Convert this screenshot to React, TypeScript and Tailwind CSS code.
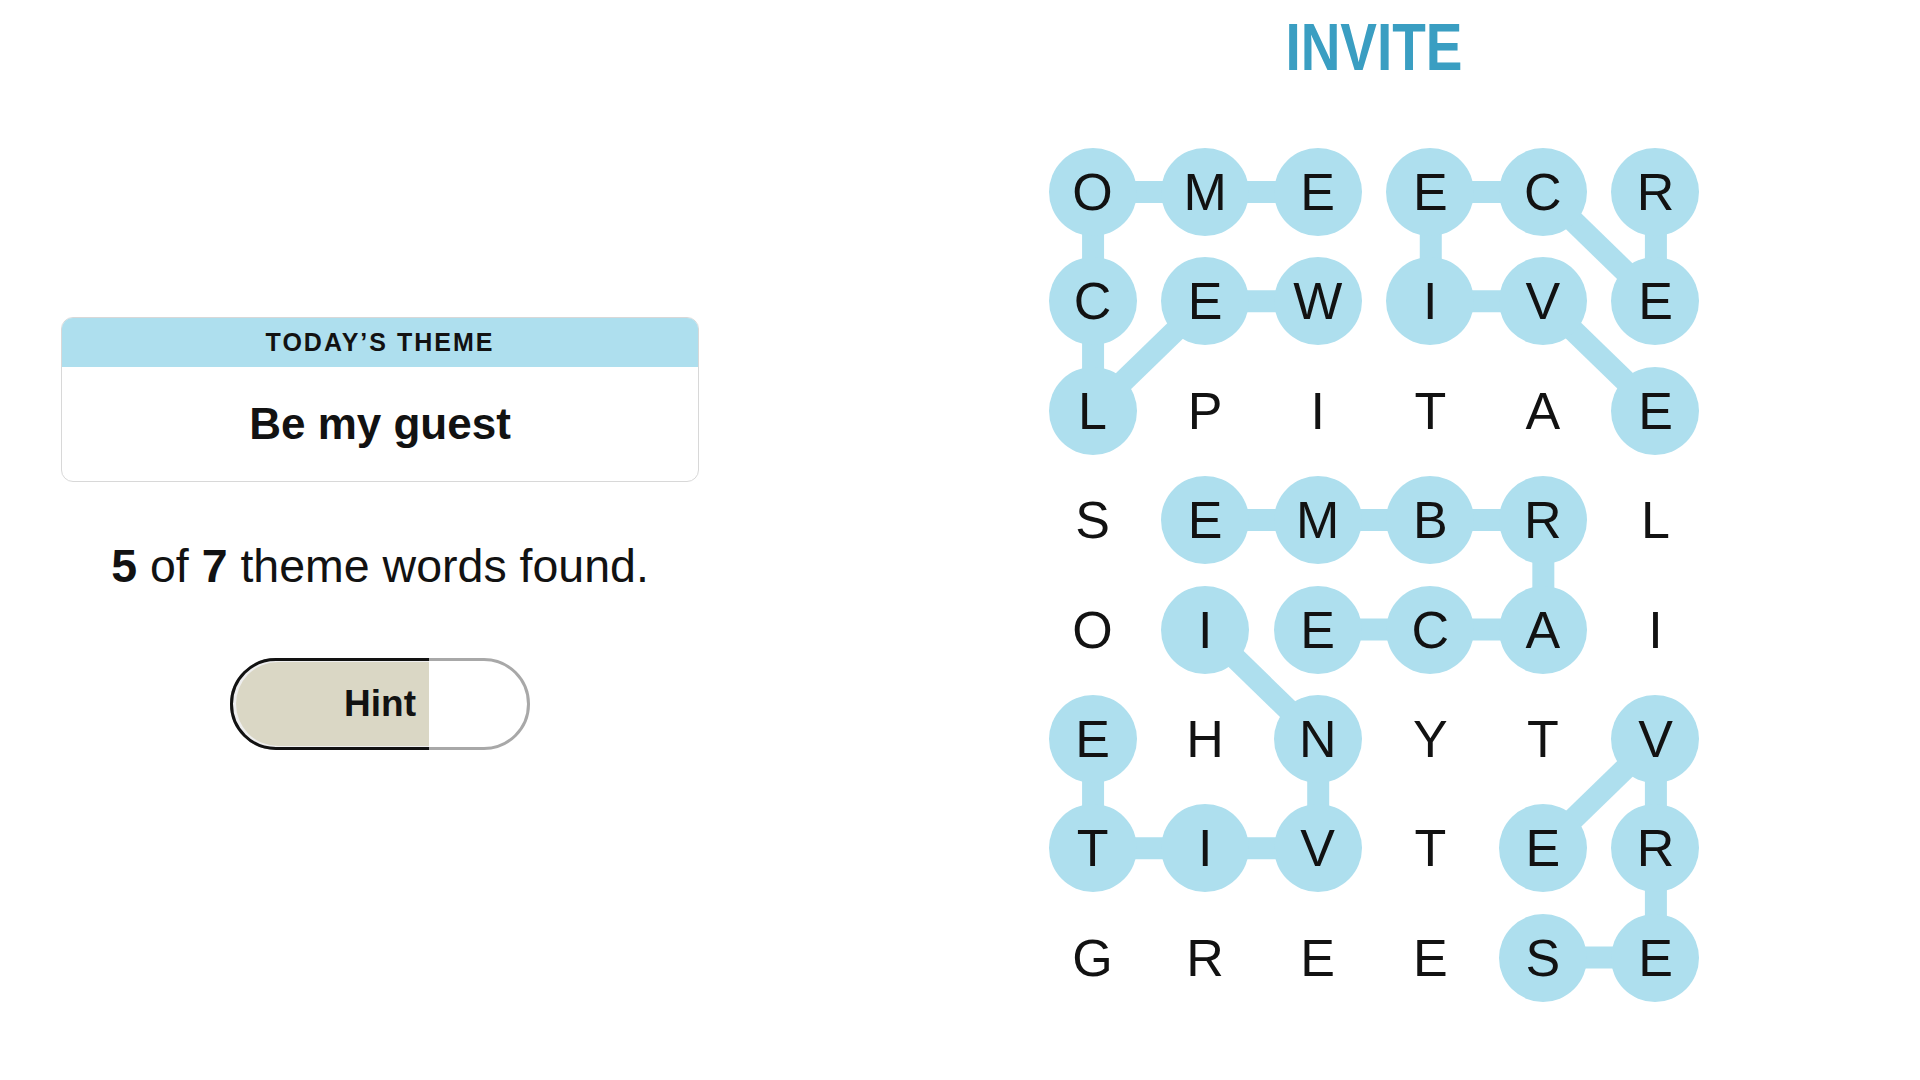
import React from 'react';

const board = [
  'OMEECR',
  'CEWIVE',
  'LPITAE',
  'SEMBRL',
  'OIECAI',
  'EHNYTV',
  'TIVTER',
  'GREESE',
];

// cells that belong to a found word
const found = new Set([
  '0-0', '0-1', '0-2', '0-3', '0-4', '0-5',
  '1-0', '1-1', '1-2', '1-3', '1-4', '1-5',
  '2-0', '2-5',
  '3-1', '3-2', '3-3', '3-4',
  '4-1', '4-2', '4-3', '4-4',
  '5-0', '5-2', '5-5',
  '6-0', '6-1', '6-2', '6-4', '6-5',
  '7-4', '7-5',
]);

// [row, col] pairs joined by a connector
const links: [number, number, number, number][] = [
  // WELCOME
  [0, 0, 0, 1], [0, 1, 0, 2], [0, 0, 1, 0], [1, 0, 2, 0], [2, 0, 1, 1], [1, 1, 1, 2],
  // RECEIVE
  [0, 5, 1, 5], [1, 5, 0, 4], [0, 4, 0, 3], [0, 3, 1, 3], [1, 3, 1, 4], [1, 4, 2, 5],
  // EMBRACE
  [3, 1, 3, 2], [3, 2, 3, 3], [3, 3, 3, 4], [3, 4, 4, 4], [4, 4, 4, 3], [4, 3, 4, 2],
  // INVITE
  [4, 1, 5, 2], [5, 2, 6, 2], [6, 2, 6, 1], [6, 1, 6, 0], [6, 0, 5, 0],
  // SERVE
  [7, 4, 7, 5], [7, 5, 6, 5], [6, 5, 5, 5], [5, 5, 6, 4],
];

const COL = 112.6;
const ROW = 109.4;
const cx = (c: number) => 44 + c * COL;
const cy = (r: number) => 44 + r * ROW;

const Board: React.FC = () => (
  <div className="relative grid grid-cols-[repeat(6,88px)] gap-x-[24.6px] gap-y-[21.4px]">
    <svg className="absolute inset-0 h-full w-full" viewBox="0 0 651 854" width={651} height={854}>
      {links.map(([r1, c1, r2, c2], i) => (
        <line key={i} x1={cx(c1)} y1={cy(r1)} x2={cx(c2)} y2={cy(r2)} stroke="#aedfee" strokeWidth={22} />
      ))}
    </svg>
    {board.map((row, r) =>
      row.split('').map((ch, c) => (
        <div
          key={`${r}-${c}`}
          className={`relative flex h-[88px] w-[88px] items-center justify-center rounded-full text-[52px] leading-none text-[#121212] ${
            found.has(`${r}-${c}`) ? 'bg-[#aedfee]' : ''
          }`}
        >
          {ch}
        </div>
      ))
    )}
  </div>
);

export default function App() {
  return (
    <div className="flex h-[1080px] w-[1920px] bg-white font-['Liberation_Sans',Arial,sans-serif] text-[#121212]">
      <div className="flex w-[760px] flex-col items-center px-[61px] pt-[317px]">
        <div className="w-full overflow-hidden rounded-[12px] border border-[#d8d8d8]">
          <div className="flex h-[49px] items-center justify-center bg-[#aedfee] text-[25px] font-bold tracking-[2px]">
            TODAY’S THEME
          </div>
          <div className="flex h-[114px] items-center justify-center text-[44px] font-bold">Be my guest</div>
        </div>

        <p className="mt-[61px] text-[46.5px] leading-none">
          <b>5</b> of <b>7</b> theme words found.
        </p>

        <button className="relative mt-[68px] h-[92px] w-[300px]">
          <div className="absolute inset-0 rounded-full border-[3px] border-[#a8a8a8] bg-white" />
          <div className="absolute inset-y-0 left-0 w-[199px] overflow-hidden">
            <div className="relative h-[92px] w-[300px] rounded-full border-[3px] border-[#121212] bg-[#eeeeee]">
              <div className="absolute bottom-[1px] left-[3px] right-0 top-[1px] rounded-full bg-[#dad7c5]" />
            </div>
          </div>
          <span className="relative flex h-full items-center justify-center text-[37px] font-bold">Hint</span>
        </button>
      </div>

      <div className="ml-[68px] flex flex-1 flex-col items-center pt-[13px]">
        <h1 className="inline-block scale-x-[0.82] text-[67px] font-bold leading-none text-[#3a9ec2]">INVITE</h1>
        <div className="mt-[68px]">
          <Board />
        </div>
      </div>
    </div>
  );
}
